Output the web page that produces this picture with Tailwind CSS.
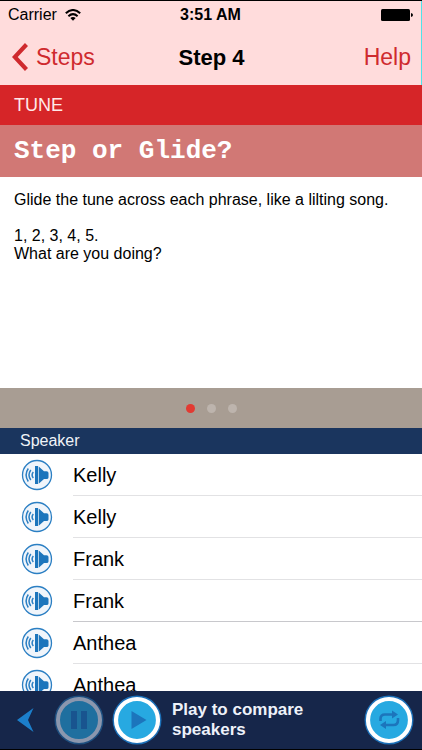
<!DOCTYPE html>
<html lang="en">
<head>
<meta charset="utf-8">
<meta name="viewport" content="width=device-width, initial-scale=1">
<title>Step 4</title>
<script src="https://cdn.jsdelivr.net/npm/@tailwindcss/browser@4"></script>
</head>
<body class="flex h-screen flex-col overflow-hidden border-y border-black bg-white font-['Liberation_Sans',Arial,sans-serif] text-black">
<svg class="hidden" aria-hidden="true">
  <symbol id="speaker" viewBox="0 0 32 32">
    <circle cx="16" cy="16" r="14.500" fill="#f0f5fb" stroke="#2b7fc3" stroke-width="1.300"/>
    <path d="M14 7h3v18h-3z" fill="#1c75bc"/>
    <path d="M17.700 7.500L23 12.300H25.500Q27.500 12.300 27.500 14V18.500Q27.500 20 25.500 20H23L17.700 24.800z" fill="#1c75bc"/>
    <path d="M12.300 13q-2.400 3 0 6M9.800 11q-3.600 5 0 10M7.300 9.500q-4.400 6.500 0 13" fill="none" stroke="#2b7fc3" stroke-width="1.500"/>
  </symbol>
</svg>

<header class="shrink-0 border-r border-[#4fe3ea] bg-[#ffdcdc]">
  <div class="grid h-7 grid-cols-3 items-center pr-2 pl-2 text-base">
    <div class="flex items-center gap-2">
      <span>Carrier</span>
      <svg class="h-3 w-4" viewBox="0 0 16 12" fill="none" stroke="#000" stroke-width="2" aria-hidden="true">
        <path d="M.8 4.300Q8-2.300 15.200 4.300M3.400 7.200Q8 3 12.600 7.200"/>
        <path d="M5.300 9Q8 6.800 10.700 9L8 11.800z" fill="#000" stroke="none"/>
      </svg>
    </div>
    <time class="text-center font-bold">3:51 AM</time>
    <svg class="h-3 w-8 justify-self-end" viewBox="0 0 32 12" aria-hidden="true">
      <rect x="0" y="0" width="29" height="12" rx="1.500"/>
      <path d="M30 4q2 .5 2 2t-2 2z"/>
    </svg>
  </div>
  <nav class="grid h-14 grid-cols-3 items-center pr-2.5 pl-3 text-[23px] text-[#cf2a2e]">
    <a href="#steps" class="flex items-center gap-2">
      <svg class="h-7 w-4" viewBox="0 0 16 28" fill="none" stroke="currentColor" stroke-width="4.200" aria-hidden="true"><path d="M14.500 1.500L2.800 14L14.500 26.500"/></svg>
      Steps
    </a>
    <h1 class="text-center text-[22px] font-bold text-black">Step 4</h1>
    <a href="#help" class="text-right">Help</a>
  </nav>
</header>

<main class="flex min-h-0 flex-1 flex-col">
  <p class="flex h-10 shrink-0 items-center bg-[#d62528] px-3.5 text-lg text-[#ffe9e9]">TUNE</p>
  <h2 class="flex h-13 shrink-0 items-center bg-[#d17875] px-3.5 font-['Liberation_Mono','Courier_New',monospace] text-[26px] font-bold text-white">Step or Glide?</h2>
  <section class="min-h-[211px] shrink-0 px-3.5 py-3.5 text-base leading-[18px]">
    <p>Glide the tune across each phrase, like a lilting song.</p>
    <p class="mt-[18px]">1, 2, 3, 4, 5.<br>What are you doing?</p>
  </section>
  <div class="flex h-10 shrink-0 items-center justify-center gap-3 bg-[#a89d93]">
    <button aria-label="Page 1" class="size-[9px] rounded-full bg-[#e23a32]"></button>
    <button aria-label="Page 2" class="size-[9px] rounded-full bg-[#bdb4ad]"></button>
    <button aria-label="Page 3" class="size-[9px] rounded-full bg-[#bdb4ad]"></button>
  </div>
  <h3 class="flex h-[26px] shrink-0 items-center bg-[#1a355e] px-5 text-base text-[#f0f3f8]">Speaker</h3>
  <ul class="min-h-0 flex-1 overflow-hidden text-xl">
    <li class="flex h-[42px] gap-5 pl-[21px]"><button aria-label="Play Kelly 1" class="self-center"><svg class="size-8"><use href="#speaker"/></svg></button><span class="flex flex-1 items-center border-b border-[#e2e2e4]">Kelly</span></li>
    <li class="flex h-[42px] gap-5 pl-[21px]"><button aria-label="Play Kelly 2" class="self-center"><svg class="size-8"><use href="#speaker"/></svg></button><span class="flex flex-1 items-center border-b border-[#e2e2e4]">Kelly</span></li>
    <li class="flex h-[42px] gap-5 pl-[21px]"><button aria-label="Play Frank 1" class="self-center"><svg class="size-8"><use href="#speaker"/></svg></button><span class="flex flex-1 items-center border-b border-[#e2e2e4]">Frank</span></li>
    <li class="flex h-[42px] gap-5 pl-[21px]"><button aria-label="Play Frank 2" class="self-center"><svg class="size-8"><use href="#speaker"/></svg></button><span class="flex flex-1 items-center border-b border-[#c8c8cc]">Frank</span></li>
    <li class="flex h-[42px] gap-5 pl-[21px]"><button aria-label="Play Anthea 1" class="self-center"><svg class="size-8"><use href="#speaker"/></svg></button><span class="flex flex-1 items-center border-b border-[#e2e2e4]">Anthea</span></li>
    <li class="flex h-[42px] gap-5 pl-[21px]"><button aria-label="Play Anthea 2" class="self-center"><svg class="size-8"><use href="#speaker"/></svg></button><span class="flex flex-1 items-center border-b border-[#e2e2e4]">Anthea</span></li>
  </ul>
</main>

<footer class="flex h-[58px] shrink-0 items-center bg-[#16264a] pr-2 pl-4">
  <button aria-label="Previous"><svg class="h-6 w-[18px]" viewBox="0 0 18 24"><path d="M17.500 0L1 12L17.500 24L12 12z" fill="#1c7fcb"/></svg></button>
  <button aria-label="Pause" class="ml-5"><svg class="size-[50px]" viewBox="0 0 50 50">
    <circle cx="25" cy="25" r="24.500" fill="#1d4f80"/><circle cx="25" cy="25" r="21" fill="#1f6f9f" stroke="#8b97ae" stroke-width="4"/>
    <path d="M17 16h6v18h-6zM27 16h6v18h-6z" fill="#19548f"/>
  </svg></button>
  <button aria-label="Play" class="ml-2"><svg class="size-[50px]" viewBox="0 0 50 50">
    <circle cx="25" cy="25" r="24.500" fill="#1c70b8"/><circle cx="25" cy="25" r="21" fill="#27a9e1" stroke="#fff" stroke-width="4.200"/>
    <path d="M19.500 16L34.500 25L19.500 34z" fill="#1c75bc"/>
  </svg></button>
  <p class="ml-2.5 min-w-0 flex-1 pr-12 text-[17px] leading-5 font-bold text-[#eef2fa]">Play to compare speakers</p>
  <button aria-label="Repeat"><svg class="size-[50px]" viewBox="0 0 50 50">
    <circle cx="25" cy="25" r="24.500" fill="#1c70b8"/><circle cx="25" cy="25" r="21" fill="#27a9e1" stroke="#fff" stroke-width="4.200"/>
    <path d="M16.500 26v-2q0-4.500 4.500-4.500h8M34 23v2q0 5-4.500 5h-8" fill="none" stroke="#1c75bc" stroke-width="2.600"/>
    <path d="M28 15.500L34 19.500L28 23.500zM22 26L16 30L22 34z" fill="#1c75bc"/>
  </svg></button>
</footer>
</body>
</html>
